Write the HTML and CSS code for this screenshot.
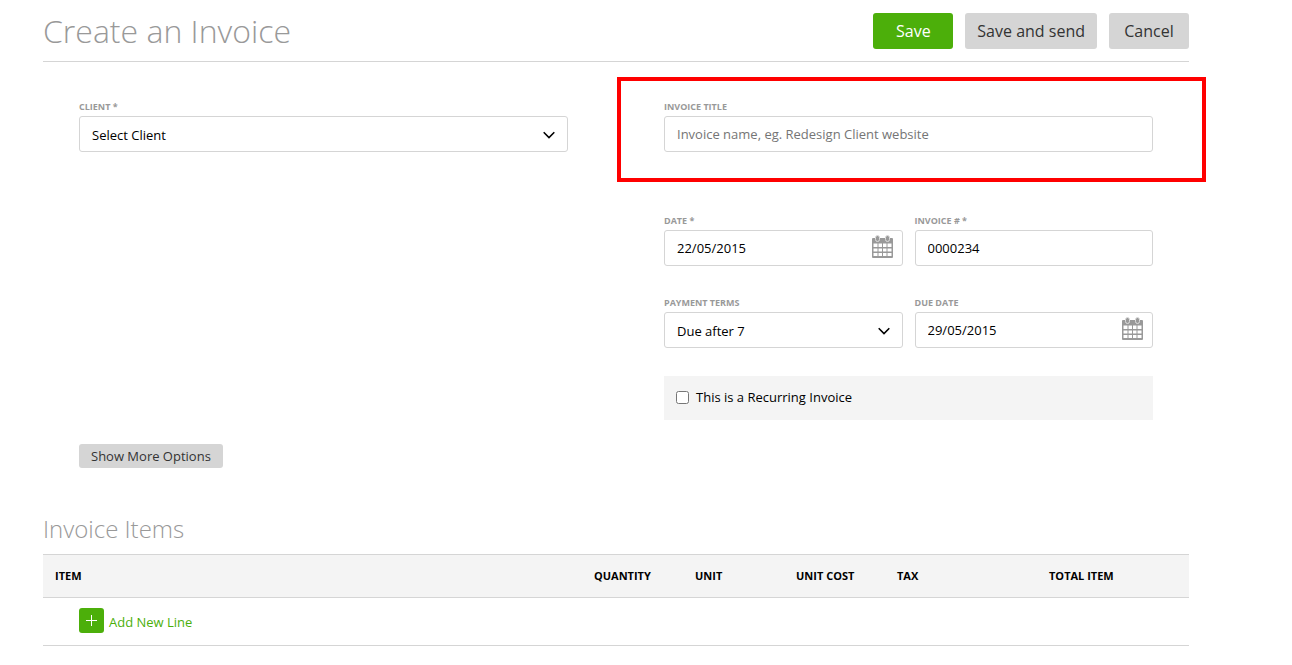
FILE: index.html
```html
<!DOCTYPE html>
<html lang="en">
<head>
<meta charset="utf-8">
<title>Create an Invoice</title>
<link rel="stylesheet" href="styles.css">
</head>
<body>
<svg class="symbols" aria-hidden="true">
  <symbol id="calendar" viewBox="0 0 21 24">
    <path class="cal-body" fill-rule="evenodd" d="M1 3h19a1 1 0 0 1 1 1v18a1 1 0 0 1-1 1H1a1 1 0 0 1-1-1V4a1 1 0 0 1 1-1zM1.500 8.500v3.500h4V8.500zM6.500 8.500v3.500h3.500V8.500zM11 8.500v3.500h3.500V8.500zM15.500 8.500v3.500h4V8.500zM1.500 13.500v3h4v-3zM6.500 13.500v3h3.500v-3zM11 13.500v3h3.500v-3zM15.500 13.500v3h4v-3zM1.500 18v3h4v-3zM6.500 18v3h3.500v-3zM11 18v3h3.500v-3zM15.500 18v3h4v-3z"/>
    <rect class="cal-ring" x="3.500" y="0.500" width="4" height="6" rx="2"/>
    <rect class="cal-ring" x="13.500" y="0.500" width="4" height="6" rx="2"/>
  </symbol>
  <symbol id="chevron" viewBox="0 0 12 8">
    <path class="chevron-line" d="M0.700 1.200l5.300 5.300 5.300-5.300"/>
  </symbol>
</svg>
<main class="page">
  <form class="invoice">
    <header class="page-header">
      <h1 class="page-title">Create an Invoice</h1>
      <div class="actions">
        <button type="submit" class="btn btn-primary">Save</button>
        <button type="button" class="btn">Save and send</button>
        <button type="button" class="btn">Cancel</button>
      </div>
    </header>

    <section class="details">
      <div class="columns">
        <div class="field">
          <label class="label" for="client">Client *</label>
          <div class="control">
            <select class="input" id="client"><option>Select Client</option></select>
            <svg class="chevron" aria-hidden="true"><use href="#chevron"/></svg>
          </div>
        </div>
        <div class="column">
          <div class="field highlighted">
            <label class="label" for="title">Invoice title</label>
            <input class="input" id="title" type="text" placeholder="Invoice name, eg. Redesign Client website">
          </div>
          <div class="pairs">
            <div class="field">
              <label class="label" for="date">Date *</label>
              <div class="control">
                <input class="input" id="date" type="text" value="22/05/2015">
                <svg class="calendar" aria-hidden="true"><use href="#calendar"/></svg>
              </div>
            </div>
            <div class="field">
              <label class="label" for="number">Invoice # *</label>
              <input class="input" id="number" type="text" value="0000234">
            </div>
            <div class="field">
              <label class="label" for="terms">Payment terms</label>
              <div class="control">
                <select class="input" id="terms"><option>Due after 7</option></select>
                <svg class="chevron" aria-hidden="true"><use href="#chevron"/></svg>
              </div>
            </div>
            <div class="field">
              <label class="label" for="due">Due date</label>
              <div class="control">
                <input class="input" id="due" type="text" value="29/05/2015">
                <svg class="calendar" aria-hidden="true"><use href="#calendar"/></svg>
              </div>
            </div>
          </div>
          <div class="recurring">
            <input class="checkbox" type="checkbox" id="recurring">
            <label for="recurring">This is a Recurring Invoice</label>
          </div>
        </div>
      </div>
      <button type="button" class="btn btn-small">Show More Options</button>
    </section>

    <section class="items">
      <h2 class="section-title">Invoice Items</h2>
      <table class="table">
        <colgroup>
          <col>
          <col class="col-narrow">
          <col class="col-narrow">
          <col class="col-narrow">
          <col class="col-wide">
          <col class="col-wide">
        </colgroup>
        <thead>
          <tr>
            <th scope="col">Item</th>
            <th scope="col">Quantity</th>
            <th scope="col">Unit</th>
            <th scope="col">Unit cost</th>
            <th scope="col">Tax</th>
            <th scope="col">Total item</th>
          </tr>
        </thead>
        <tbody>
          <tr>
            <td colspan="6">
              <button type="button" class="add-line">
                <span class="add-icon"><svg class="plus" viewBox="0 0 11 11" aria-hidden="true"><path d="M5 0h1v5h5v1H6v5H5V6H0V5h5z"/></svg></span>
                <span class="add-text">Add New Line</span>
              </button>
            </td>
          </tr>
        </tbody>
      </table>
    </section>
  </form>
</main>
</body>
</html>
```

FILE: styles.css
```css
* { box-sizing: border-box; }

body {
  margin: 0;
  background: #fff;
  color: #000;
  font: 13px/20px "Open Sans", "Noto Sans", sans-serif;
}

button, input, select { font: inherit; color: inherit; }
button { cursor: pointer; }

.symbols { display: none; }

.page { padding: 0 103px 0 43px; }

.page-header {
  display: flex;
  align-items: center;
  justify-content: space-between;
  padding: 13px 0 12px;
  border-bottom: 1px solid #d5d5d5;
}

.page-title, .section-title {
  margin: 0;
  color: #999;
  font-weight: 300;
}
.page-title { font-size: 32px; line-height: 36px; }
.section-title { font-size: 24px; line-height: 32px; }

.actions { display: flex; gap: 12px; }

.btn {
  min-width: 80px;
  height: 36px;
  padding: 0 12px;
  border: 0;
  border-radius: 3px;
  background: #d5d5d5;
  color: #333;
  font-size: 16px;
}
.btn-primary { background: #4caf0a; color: #fff; }
.btn-small {
  height: 24px;
  margin-top: 24px;
  font-size: 13px;
  line-height: 24px;
}

.details { padding: 39px 36px 0; }

.columns {
  display: grid;
  grid-template-columns: 1fr 1fr;
  gap: 96px;
}

.label {
  display: block;
  margin-bottom: 3px;
  color: #999;
  font-size: 9px;
  font-weight: 700;
  line-height: 12px;
  text-transform: uppercase;
}

.control { position: relative; }

.input {
  display: block;
  width: 100%;
  height: 36px;
  padding: 0 12px;
  border: 1px solid #d5d5d5;
  border-radius: 3px;
  background: #fff;
  appearance: none;
}
select.input { padding-top: 2px; }
.input::placeholder { color: #757575; }

.chevron {
  position: absolute;
  top: 15px;
  right: 13px;
  width: 12px;
  height: 8px;
  pointer-events: none;
}
.chevron-line { fill: none; stroke: #000; stroke-width: 1.6; }

.calendar {
  position: absolute;
  top: 5px;
  right: 10px;
  width: 21px;
  height: 24px;
}
.cal-body { fill: #999; }
.cal-ring { fill: #999; stroke: #ddd; stroke-width: 1; }

/* Red frame drawing attention to a field */
.highlighted { position: relative; }
.highlighted::after {
  content: "";
  position: absolute;
  inset: -24px -53px -30px -47px;
  border: 4px solid #f00;
  pointer-events: none;
}

.pairs {
  display: grid;
  grid-template-columns: 1fr 1fr;
  gap: 31px 12px;
  margin-top: 63px;
}

.recurring {
  display: flex;
  align-items: center;
  gap: 7px;
  margin-top: 28px;
  padding: 11px 12px 13px;
  background: #f4f4f4;
}
.checkbox { width: 13px; height: 13px; margin: 0; }

.items { padding-top: 45px; }

.table {
  width: 100%;
  margin-top: 9px;
  border-spacing: 0;
  table-layout: fixed;
}
.col-narrow { width: 101px; }
.col-wide { width: 152px; }

.table th {
  height: 44px;
  padding: 0 12px;
  border: solid #d5d5d5;
  border-width: 1px 0;
  background: #f4f4f4;
  font-size: 11px;
  font-weight: 700;
  text-align: left;
  text-transform: uppercase;
}
.table td {
  padding: 10px 36px 12px;
  border-bottom: 1px solid #d5d5d5;
}

.add-line {
  display: flex;
  align-items: center;
  gap: 5px;
  padding: 0;
  border: 0;
  background: none;
  color: #4caf0a;
}
.add-icon {
  display: grid;
  place-items: center;
  width: 25px;
  height: 25px;
  border-radius: 3px;
  background: #4caf0a;
}
.plus { width: 11px; height: 11px; fill: #fff; }
.add-text { padding-top: 3px; }
```
